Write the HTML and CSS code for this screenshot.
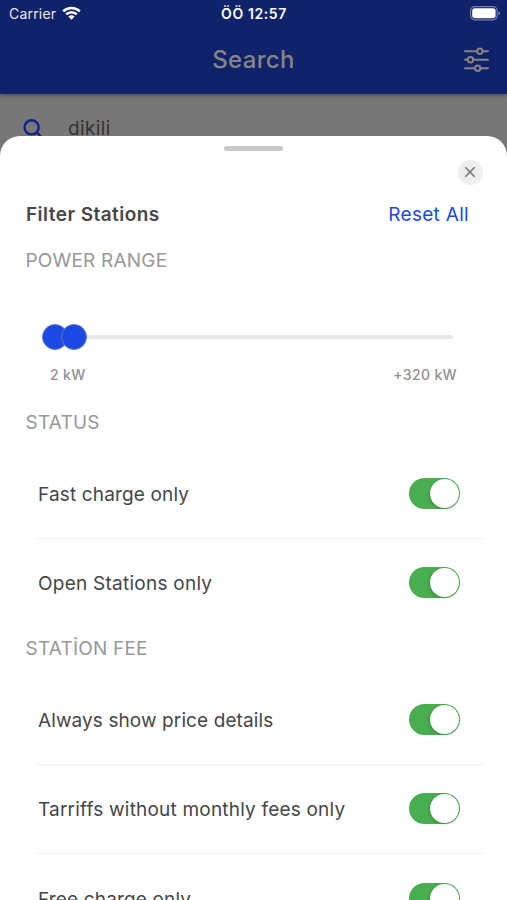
FILE: index.html
```html
<!DOCTYPE html>
<html lang="en">
<head>
    <meta charset="UTF-8">
    <meta name="viewport" content="width=device-width, initial-scale=1.0">
    <title>Search</title>
    <link rel="stylesheet" href="styles.css">
</head>
<body>
    <div class="header">
        <div class="status-bar">
            <div class="carrier">
                <span class="carrier-name">Carrier</span>
                <svg class="wifi" width="19" height="14" viewBox="0 0 19 14">
                    <path d="M1.2 5.3a12 12 0 0 1 16.6 0M4.2 8.3a7.6 7.6 0 0 1 10.6 0" fill="none" stroke="#fff" stroke-width="2.5"/>
                    <path d="M9.5 13.7L6.4 10.6a4.4 4.4 0 0 1 6.2 0z" fill="#fff"/>
                </svg>
            </div>
            <span class="clock">ÖÖ 12:57</span>
            <svg class="battery" width="31" height="15" viewBox="0 0 31 15">
                <rect x="0.6" y="0.6" width="26.6" height="13.2" rx="4.2" fill="none" stroke="#7080b4" stroke-width="1.2"/>
                <rect x="2.2" y="2.2" width="23.4" height="10" rx="2.6" fill="#fff"/>
                <path d="M28.5 5v4.6q1.6-.8 1.6-2.3t-1.6-2.3z" fill="#7080b4"/>
            </svg>
        </div>
        <div class="title-bar">
            <h1>Search</h1>
            <svg class="filter-icon" width="25" height="26" viewBox="0 0 25 26" fill="none" stroke="#858585" stroke-width="2" stroke-linecap="round">
                <path d="M1 4.3h12M18.8 4.3H24M1 12.8h2.7M9.4 12.8H24M1 21.2h9.8M16.6 21.2H24"/>
                <circle cx="15.9" cy="4.3" r="2.7"/>
                <circle cx="6.5" cy="12.8" r="2.7"/>
                <circle cx="13.7" cy="21.2" r="2.7"/>
            </svg>
        </div>
    </div>

    <div class="search-row">
        <svg width="20" height="20" viewBox="0 0 20 20" fill="none" stroke="#10248a" stroke-width="2.4">
            <circle cx="8.6" cy="8.3" r="7.1"/>
            <path d="M13.4 13l6 6"/>
        </svg>
        <span>dikili</span>
    </div>

    <div class="sheet">
        <div class="handle"></div>
        <div class="close">
            <svg width="12" height="12" viewBox="0 0 12 12" fill="none" stroke="#838383" stroke-width="1.7" stroke-linecap="round">
                <path d="M1.7 1.7l8.6 8.6M10.3 1.7l-8.6 8.6"/>
            </svg>
        </div>

        <div class="sheet-header">
            <h2>Filter Stations</h2>
            <a class="reset">Reset All</a>
        </div>

        <h3 class="power-title">POWER RANGE</h3>
        <div class="slider">
            <span class="thumb"></span>
            <span class="thumb"></span>
            <span class="track"></span>
        </div>
        <div class="slider-labels">
            <span class="min">2 kW</span>
            <span class="max">+320 kW</span>
        </div>

        <h3 class="status-title">STATUS</h3>
        <ul class="options">
            <li><span class="fast">Fast charge only</span><span class="toggle"></span></li>
            <li><span class="open">Open Stations only</span><span class="toggle"></span></li>
        </ul>

        <h3 class="fee-title">STATİON FEE</h3>
        <ul class="options">
            <li><span class="price">Always show price details</span><span class="toggle"></span></li>
            <li><span class="tariff">Tarriffs without monthly fees only</span><span class="toggle"></span></li>
            <li><span class="free">Free charge only</span><span class="toggle"></span></li>
        </ul>
    </div>
</body>
</html>
```
FILE: styles.css
```css
:root {
    --header-bg: #10226a;
    --primary-color: #1c49e4;
    --text-primary: #464646;
    --text-secondary: #979797;
    --toggle-on: #49ae4f;
    --border-color: #f3f3f3;
}

* {
    box-sizing: border-box;
}

body {
    font-family: Inter, 'Liberation Sans', sans-serif;
    margin: 0;
    height: 900px;
    position: relative;
    overflow: hidden;
    background-color: #777;
    color: var(--text-primary);
}

h1, h2, h3, ul {
    margin: 0;
    padding: 0;
}

/* Header */
.header {
    height: 94px;
    background-color: var(--header-bg);
    box-shadow: 0 1px 5px rgba(0, 0, 0, 0.45);
    position: relative;
}

.status-bar {
    display: grid;
    grid-template-columns: 1fr auto 1fr;
    align-items: center;
    height: 27px;
    padding: 0 6px 0 9px;
    color: #fff;
    font-size: 14px;
}

.carrier {
    display: flex;
    align-items: center;
    gap: 6px;
    color: #e4e8f4;
    letter-spacing: 0.2px;
}

.wifi {
    margin-top: -2px;
}

.clock {
    margin-right: 2px;
    font-weight: 600;
    letter-spacing: 0.6px;
}

.battery {
    justify-self: end;
}

.title-bar {
    display: grid;
    grid-template-columns: 1fr auto 1fr;
    align-items: center;
    height: 65px;
    padding: 0 18px;
}

.title-bar h1 {
    grid-column: 2;
    color: #858585;
    font-size: 24px;
    font-weight: 500;
    letter-spacing: 0.35px;
}

.filter-icon {
    justify-self: end;
}

/* Search field behind the sheet */
.search-row {
    display: flex;
    align-items: center;
    gap: 25px;
    height: 69px;
    padding-left: 23px;
    color: #333;
    font-size: 19px;
    letter-spacing: 0.4px;
}

/* Bottom sheet */
.sheet {
    position: absolute;
    top: 136px;
    left: 0;
    right: 0;
    bottom: 0;
    overflow: hidden;
    display: flex;
    flex-direction: column;
    background-color: #fff;
    border-radius: 20px 20px 0 0;
}

.sheet > * {
    flex-shrink: 0;
}

.handle {
    width: 59px;
    height: 5px;
    margin: 9.5px auto 0;
    border-radius: 3px;
    background-color: #c8c8c8;
}

.close {
    display: flex;
    align-items: center;
    justify-content: center;
    align-self: flex-end;
    width: 25px;
    height: 25px;
    margin: 9px 24.5px 0 0;
    border-radius: 50%;
    background-color: #eee;
}

.sheet-header {
    display: flex;
    justify-content: space-between;
    align-items: center;
    height: 24px;
    margin-top: 17.5px;
    padding: 0 38px 0 26px;
    font-size: 19px;
}

.sheet-header h2 {
    font-size: 19px;
    font-weight: 600;
    letter-spacing: 0.45px;
}

.reset {
    color: var(--primary-color);
    letter-spacing: 0.3px;
}

h3 {
    height: 24px;
    padding-left: 25.5px;
    color: var(--text-secondary);
    font-size: 19px;
    font-weight: 400;
    line-height: 26px;
    letter-spacing: 0.2px;
}

.power-title {
    margin-top: 22px;
}

/* Power range slider */
.slider {
    display: flex;
    align-items: center;
    height: 26px;
    margin: 52px 54px 0 42px;
}

.thumb {
    width: 26px;
    height: 26px;
    border: 1px solid #6079b8;
    border-radius: 50%;
    background-color: var(--primary-color);
}

.thumb + .thumb {
    margin-left: -7.5px;
}

.track {
    flex: 1;
    height: 4px;
    border-radius: 0 2px 2px 0;
    background-color: #e7e7e7;
}

.slider-labels {
    display: flex;
    justify-content: space-between;
    margin-top: 16px;
    padding: 0 50px;
    color: #8f8f8f;
    font-size: 14px;
    font-weight: 500;
    line-height: 18px;
    letter-spacing: 0.35px;
}

.status-title {
    margin-top: 26px;
}

.fee-title {
    margin-top: 9px;
}

/* Toggle rows */
.options {
    margin: 14.5px 23px 0 36px;
    list-style: none;
}

.options li {
    display: flex;
    align-items: center;
    justify-content: space-between;
    height: 89.25px;
    padding: 0 24px 0 2px;
    font-size: 19px;
    line-height: 23px;
    letter-spacing: 0.15px;
}

.options li span:first-child {
    padding-top: 2px;
}

.options li + li {
    border-top: 1px solid var(--border-color);
}

.options .open {
    letter-spacing: 0.25px;
}

.options .price {
    letter-spacing: 0.1px;
}

.options .tariff {
    letter-spacing: 0.2px;
}

.toggle {
    width: 51px;
    height: 31px;
    padding: 1px;
    border-radius: 16px;
    background-color: var(--toggle-on);
}

.toggle::after {
    content: "";
    display: block;
    width: 29px;
    height: 29px;
    margin-left: 20px;
    border-radius: 50%;
    background-color: #fff;
    box-shadow: -1px 1px 3px rgba(0, 0, 0, 0.2);
}
```
